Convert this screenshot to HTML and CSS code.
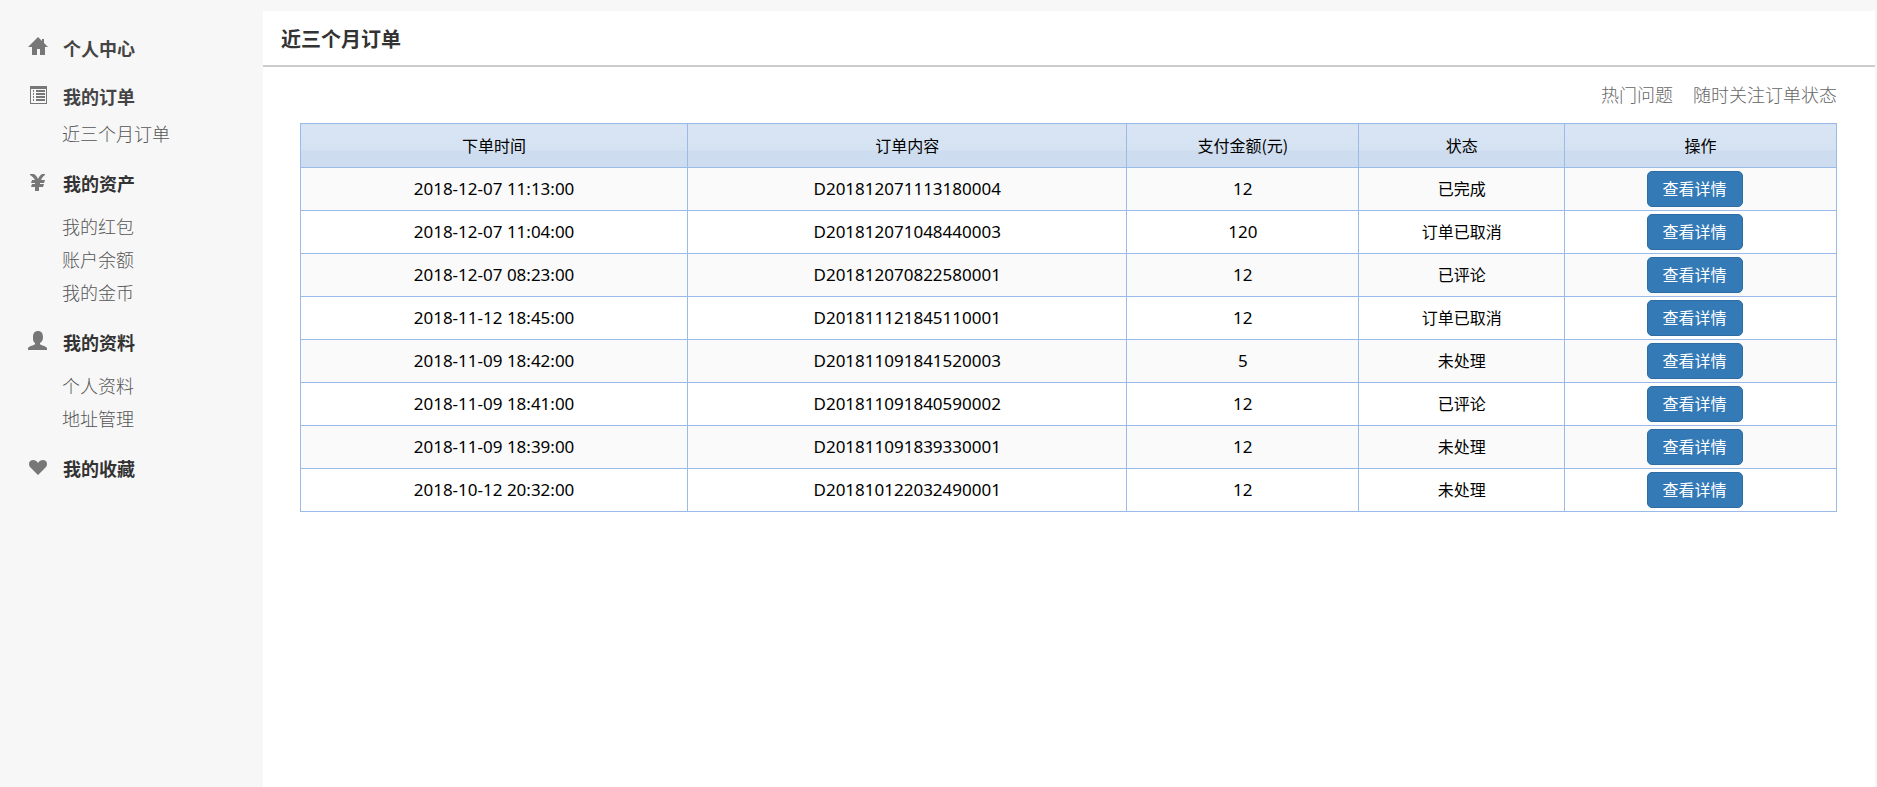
FILE: index.html
```html
<!DOCTYPE html>
<html lang="zh-CN">
<head>
<meta charset="utf-8">
<meta name="viewport" content="width=device-width, initial-scale=1">
<title>近三个月订单</title>
<link rel="stylesheet" href="styles.css">
</head>
<body>
<div class="page">
  <nav class="sidebar" aria-label="个人中心">
    <section class="menu-group">
      <h2 class="menu-title is-link"><svg class="icon" viewBox="0 0 20 20" aria-hidden="true"><path d="M10 0 14 4V2h2v4l4 4h-3v8h-5v-6H9v6H4v-8H0z"/></svg><a href="#">个人中心</a></h2>
    </section>
    <section class="menu-group">
      <h2 class="menu-title is-link"><svg class="icon" viewBox="0 0 20 20" aria-hidden="true"><path fill-rule="evenodd" d="M2 1h17v18H2zM3 4v14h15V4zM5 5h1v2H5zm3 0h9v2H8zM5 8h1v2H5zm3 0h9v2H8zm-3 3h1v2H5zm3 0h9v2H8zm-3 3h1v2H5zm3 0h9v2H8z"/></svg><a href="#">我的订单</a></h2>
      <ul class="menu-list menu-list-tight">
        <li><a href="#">近三个月订单</a></li>
      </ul>
    </section>
    <section class="menu-group">
      <h2 class="menu-title"><svg class="icon" viewBox="0 0 20 20" aria-hidden="true"><path d="M2 2h4c2 1 3 3 4 5 1-2 2-4 4-5h3v1c-2 1-3 3-4 5h4l-1 3h-4v1h4l-1 3h-4v4H7v-4H3l1-3h3v-1H3l1-3h3C6 6 4 4 2 3z"/></svg>我的资产</h2>
      <ul class="menu-list">
        <li><a href="#">我的红包</a></li>
        <li><a href="#">账户余额</a></li>
        <li><a href="#">我的金币</a></li>
      </ul>
    </section>
    <section class="menu-group">
      <h2 class="menu-title"><svg class="icon" viewBox="0 0 20 20" aria-hidden="true"><path d="M10 0c3 0 5 2 5 6 0 3-1 5-3 6v1c0 1 6 2 7 4v2H0v-2c1-2 7-3 7-4v-1C5 11 5 9 5 6c0-4 2-6 5-6z"/></svg>我的资料</h2>
      <ul class="menu-list">
        <li><a href="#">个人资料</a></li>
        <li><a href="#">地址管理</a></li>
      </ul>
    </section>
    <section class="menu-group">
      <h2 class="menu-title"><svg class="icon" viewBox="0 0 20 20" aria-hidden="true"><path d="M10 18 3 11C2 10 1 9 1 7c0-3 2-4 4-4s4 1 5 3c1-2 3-3 5-3s4 1 4 4c0 2-1 3-2 4z"/></svg>我的收藏</h2>
    </section>
  </nav>

  <main class="content">
    <h1 class="content-title">近三个月订单</h1>
    <div class="content-body">
      <div class="quick-links">
        <a href="#">热门问题</a>
        <a href="#">随时关注订单状态</a>
      </div>
      <table class="orders">
        <colgroup>
          <col class="col-time"><col class="col-order"><col class="col-amount"><col class="col-status"><col class="col-action">
        </colgroup>
        <thead>
          <tr><th scope="col">下单时间</th><th scope="col">订单内容</th><th scope="col">支付金额(元)</th><th scope="col">状态</th><th scope="col">操作</th></tr>
        </thead>
        <tbody>
          <tr><td class="num">2018-12-07 11:13:00</td><td class="num">D201812071113180004</td><td class="num">12</td><td>已完成</td><td><button type="button" class="btn">查看详情</button></td></tr>
          <tr><td class="num">2018-12-07 11:04:00</td><td class="num">D201812071048440003</td><td class="num">120</td><td>订单已取消</td><td><button type="button" class="btn">查看详情</button></td></tr>
          <tr><td class="num">2018-12-07 08:23:00</td><td class="num">D201812070822580001</td><td class="num">12</td><td>已评论</td><td><button type="button" class="btn">查看详情</button></td></tr>
          <tr><td class="num">2018-11-12 18:45:00</td><td class="num">D201811121845110001</td><td class="num">12</td><td>订单已取消</td><td><button type="button" class="btn">查看详情</button></td></tr>
          <tr><td class="num">2018-11-09 18:42:00</td><td class="num">D201811091841520003</td><td class="num">5</td><td>未处理</td><td><button type="button" class="btn">查看详情</button></td></tr>
          <tr><td class="num">2018-11-09 18:41:00</td><td class="num">D201811091840590002</td><td class="num">12</td><td>已评论</td><td><button type="button" class="btn">查看详情</button></td></tr>
          <tr><td class="num">2018-11-09 18:39:00</td><td class="num">D201811091839330001</td><td class="num">12</td><td>未处理</td><td><button type="button" class="btn">查看详情</button></td></tr>
          <tr><td class="num">2018-10-12 20:32:00</td><td class="num">D201810122032490001</td><td class="num">12</td><td>未处理</td><td><button type="button" class="btn">查看详情</button></td></tr>
        </tbody>
      </table>
    </div>
  </main>
</div>
</body>
</html>
```
FILE: styles.css
```css
* { box-sizing: border-box; }

body {
  margin: 0;
  background: #f7f7f7;
  color: #000;
  font: 16px/24px "Noto Sans CJK SC", sans-serif;
}

a { color: inherit; text-decoration: none; }

.page {
  display: flex;
  min-height: 100vh;
  padding: 11px 2px 0 0;
}

/* Sidebar */
.sidebar {
  display: flex;
  flex-direction: column;
  flex: 0 0 263px;
  gap: 18px;
  padding: 22px 0 24px 28px;
}

.menu-title {
  display: flex;
  align-items: center;
  gap: 15px;
  margin: 0;
  color: #333;
  font-size: 18px;
  line-height: 30px;
}

.menu-title.is-link { color: #444; }

.icon {
  flex: none;
  width: 20px;
  height: 20px;
  margin-bottom: 3px;
  fill: #777;
}

.menu-list {
  margin: 12px 0 0;
  padding: 0 0 0 34px;
  list-style: none;
  color: #555;
  font-size: 18px;
  font-weight: 300;
  line-height: 33px;
}

.menu-list-tight { margin-top: 6px; }

/* Content */
.content {
  flex: 1;
  min-width: 0;
  background: #fff;
}

.content-title {
  margin: 0;
  padding: 13px 18px 11px;
  border-bottom: 2px solid #ccc;
  color: #333;
  font-size: 20px;
  line-height: 30px;
}

.content-body { padding: 11px 38px 24px 37px; }

.quick-links {
  display: flex;
  justify-content: flex-end;
  gap: 20px;
  margin-bottom: 13px;
  color: #666;
  font-size: 18px;
  font-weight: 300;
  line-height: 32px;
}

/* Orders table */
.orders {
  width: 100%;
  border-collapse: collapse;
  table-layout: fixed;
  text-align: center;
}

.col-time { width: 25.2%; }
.col-order { width: 28.6%; }
.col-amount { width: 15.1%; }
.col-status { width: 13.4%; }
.col-action { width: 17.7%; }

.orders th,
.orders td {
  padding: 2px 3px 4px;
  border: 1px solid #9abbe8;
  font-weight: 400;
}

.orders th {
  height: 44px;
  background: linear-gradient(#dae5f4, #d4e2f1 60%, #cedcef 61%, #cddcef);
}

.orders tbody tr:nth-child(odd) { background: #fafafa; }

.orders .num {
  padding: 3px;
  font-family: "Noto Sans", sans-serif;
  font-size: 17px;
}

.orders td:last-child { padding: 3px; }

.btn {
  display: inline-block;
  margin: 0 12px 0 0;
  padding: 4px 15px 6px;
  border: 1px solid #2e6da4;
  border-radius: 5px;
  background: #337ab7;
  color: #fff;
  font: inherit;
  line-height: 24px;
  vertical-align: middle;
  cursor: pointer;
}
```
